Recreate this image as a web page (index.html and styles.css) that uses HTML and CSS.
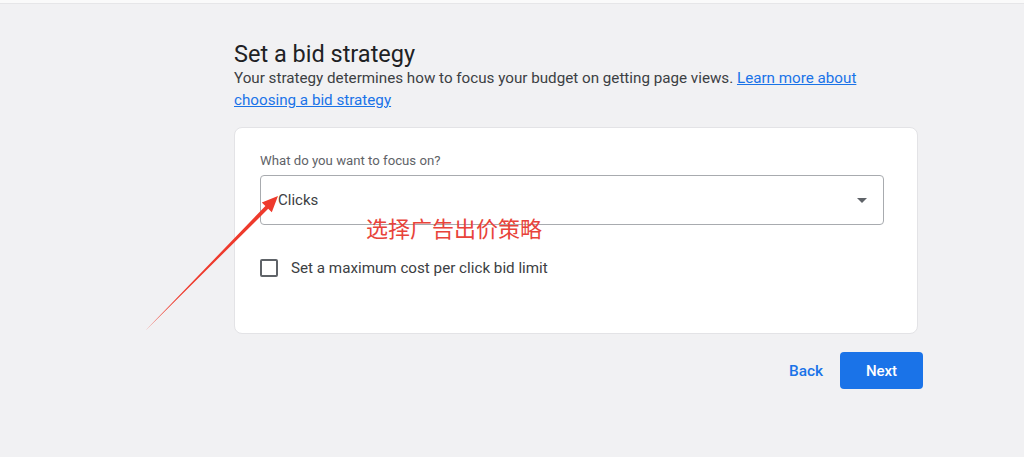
FILE: index.html
```html
<!DOCTYPE html>
<html lang="en">
<head>
<meta charset="utf-8">
<title>Set a bid strategy</title>
<link rel="stylesheet" href="styles.css">
</head>
<body>
<div class="topbar"></div>
<main class="page">
  <h1 class="title">Set a bid strategy</h1>
  <p class="subtitle">Your strategy determines how to focus your budget on getting page views. <a href="#" class="link">Learn more about choosing a bid strategy</a></p>
  <section class="card">
    <div class="field-label">What do you want to focus on?</div>
    <div class="select">
      <span class="select-value">Clicks</span>
      <span class="caret"></span>
    </div>
    <label class="check-row">
      <span class="checkbox"></span>
      <span class="check-text">Set a maximum cost per click bid limit</span>
    </label>
  </section>
  <div class="actions">
    <button class="btn-text">Back</button>
    <button class="btn-primary">Next</button>
  </div>
</main>
<div class="annotation">选择广告出价策略</div>
<svg class="arrow" width="1024" height="457" viewBox="0 0 1024 457">
  <polygon fill="#ee3a2c" points="145,331 265.4,206.0 261.8,202.5 278,196 271.8,212.3 268.2,208.8"/>
</svg>
</body>
</html>
```

FILE: styles.css
```css
* { box-sizing: border-box; }
html, body { margin: 0; padding: 0; }
body {
  width: 1024px;
  height: 457px;
  background: #f1f1f3;
  font-family: Roboto, "Liberation Sans", Arial, sans-serif;
  color: #202124;
  position: relative;
  overflow: hidden;
}
.topbar {
  height: 4px;
  background: #fafafa;
  border-bottom: 1px solid #e6e6e8;
}
.page {
  margin-left: 234px;
  width: 689px;
  padding-top: 36px;
}
.title {
  margin: 0;
  font-size: 23.5px;
  font-weight: 400;
  line-height: 28px;
  color: #202124;
}
.subtitle {
  margin: 0;
  max-width: 650px;
  font-size: 15.2px;
  line-height: 21.5px;
  color: #3c4043;
}
.link {
  color: #1a73e8;
  text-decoration: underline;
}
.card {
  margin-top: 16px;
  width: 684px;
  background: #fff;
  border: 1px solid #e3e3e6;
  border-radius: 8px;
  padding: 25px 33px 56px 25px;
}
.field-label {
  font-size: 13.2px;
  line-height: 16px;
  color: #5f6368;
}
.select {
  margin-top: 6px;
  height: 50px;
  border: 1px solid #a8abaf;
  border-radius: 4px;
  display: flex;
  align-items: center;
  padding: 0 16px 0 17px;
}
.select-value {
  flex: 1;
  font-size: 15px;
  color: #3c4043;
}
.caret {
  width: 0;
  height: 0;
  border-left: 5px solid transparent;
  border-right: 5px solid transparent;
  border-top: 5px solid #5f6368;
}
.check-row {
  margin-top: 34px;
  display: flex;
  align-items: center;
  gap: 13px;
}
.checkbox {
  width: 18px;
  height: 18px;
  border: 2px solid #5f6368;
  border-radius: 2px;
}
.check-text {
  font-size: 15.2px;
  color: #3c4043;
}
.actions {
  margin-top: 18px;
  display: flex;
  justify-content: flex-end;
  align-items: center;
  gap: 17px;
}
.btn-text {
  background: none;
  border: none;
  padding: 0;
  font-family: inherit;
  font-size: 15.4px;
  font-weight: 500;
  color: #1a73e8;
}
.btn-primary {
  width: 83px;
  height: 37px;
  background: #1a73e8;
  border: none;
  border-radius: 4px;
  font-family: inherit;
  font-size: 15px;
  font-weight: 500;
  color: #fff;
}
.annotation {
  position: absolute;
  left: 366px;
  top: 214px;
  font-family: "Noto Sans CJK SC", sans-serif;
  font-size: 22px;
  line-height: 26px;
  color: #e8433a;
}
.arrow {
  position: absolute;
  left: 0;
  top: 0;
  pointer-events: none;
}
```
